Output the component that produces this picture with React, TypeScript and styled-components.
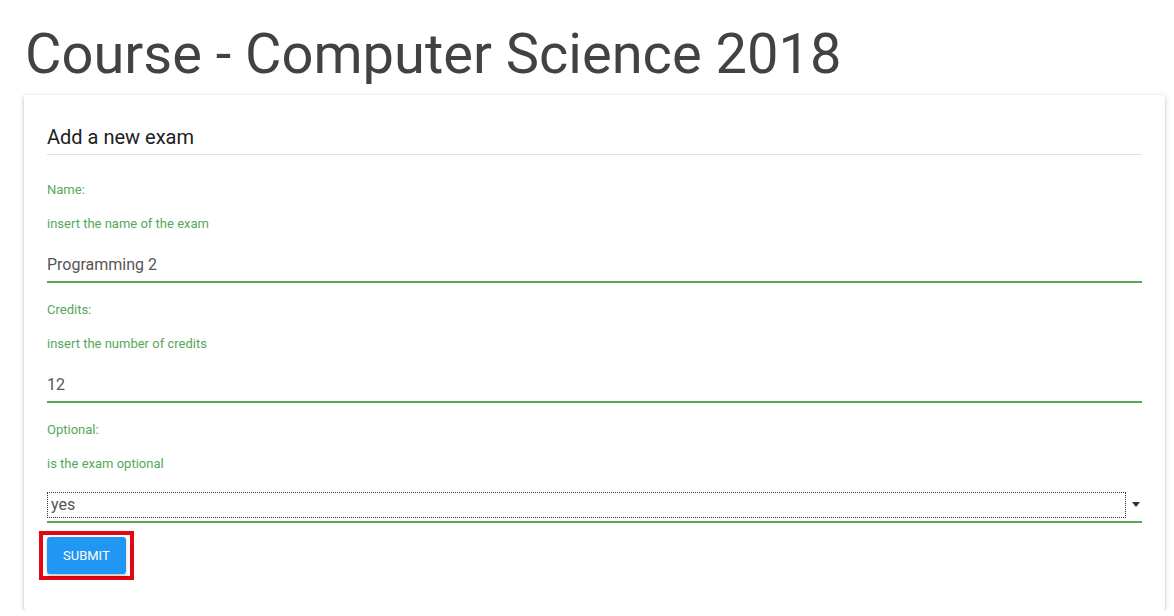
import React from "react";
import styled, { createGlobalStyle } from "styled-components";

const GlobalStyle = createGlobalStyle`
  html, body {
    margin: 0;
    padding: 0;
    background: #ffffff;
    font-family: Roboto, "Liberation Sans", sans-serif;
  }
`;

const GREEN = "#55a859";

const Page = styled.div`
  padding: 0 9px 0 24px;
`;

const PageTitle = styled.h1`
  margin: 24px 0 9px 1px;
  font-size: 56px;
  line-height: 110%;
  font-weight: 400;
  color: #424242;
`;

const Card = styled.div`
  background: #ffffff;
  border-radius: 2px;
  padding: 26px 23px 30px 23px;
  box-shadow: 0 2px 2px 0 rgba(0, 0, 0, 0.14), 0 3px 1px -2px rgba(0, 0, 0, 0.12),
    0 1px 5px 0 rgba(0, 0, 0, 0.2);
`;

const CardTitle = styled.div`
  font-size: 20px;
  line-height: 32px;
  color: #212121;
  padding-bottom: 1px;
  border-bottom: 1px solid #e0e0e0;
`;

const Form = styled.form`
  display: flex;
  flex-direction: column;
  padding-top: 25px;
`;

const Field = styled.div`
  display: flex;
  flex-direction: column;
  margin-bottom: 17px;
`;

const Label = styled.div`
  font-size: 13px;
  line-height: 20px;
  color: ${GREEN};
`;

const Hint = styled(Label)`
  margin-top: 14px;
`;

const Input = styled.div`
  margin-top: 14px;
  height: 33px;
  line-height: 33px;
  font-size: 16px;
  color: #555555;
  border-bottom: 2px solid ${GREEN};
`;

const SelectRow = styled.div`
  margin-top: 14px;
  height: 35px;
  box-sizing: border-box;
  display: flex;
  align-items: flex-start;
  padding-top: 4px;
  border-bottom: 2px solid ${GREEN};
`;

const SelectBox = styled.div`
  flex: 1;
  height: 26px;
  box-sizing: border-box;
  border: 1px dotted #333333;
  padding-left: 3px;
  font-size: 16px;
  line-height: 24px;
  color: #555555;
`;

const Caret = styled.div`
  width: 16px;
  height: 26px;
  display: flex;
  align-items: center;
  justify-content: flex-end;
  padding-right: 2px;
  box-sizing: border-box;
`;

const Highlight = styled.div`
  align-self: flex-start;
  display: flex;
  margin: -9px 0 0 -8px;
  padding: 2px 4px;
  border: 4px solid #e30613;
`;

const SubmitButton = styled.button`
  height: 37px;
  padding: 0 16px;
  border: none;
  border-radius: 3px;
  background: #2196f3;
  color: #ffffff;
  font-family: Roboto, "Liberation Sans", sans-serif;
  font-size: 13px;
  text-transform: uppercase;
  box-shadow: 0 2px 2px 0 rgba(0, 0, 0, 0.14), 0 1px 5px 0 rgba(0, 0, 0, 0.12);
  cursor: pointer;
`;

export default function App() {
  return (
    <>
      <GlobalStyle />
      <Page>
        <PageTitle>Course - Computer Science 2018</PageTitle>
        <Card>
          <CardTitle>Add a new exam</CardTitle>
          <Form onSubmit={(e) => e.preventDefault()}>
            <Field>
              <Label>Name:</Label>
              <Hint>insert the name of the exam</Hint>
              <Input>Programming 2</Input>
            </Field>
            <Field>
              <Label>Credits:</Label>
              <Hint>insert the number of credits</Hint>
              <Input>12</Input>
            </Field>
            <Field>
              <Label>Optional:</Label>
              <Hint>is the exam optional</Hint>
              <SelectRow>
                <SelectBox>yes</SelectBox>
                <Caret>
                  <svg width="8" height="5" viewBox="0 0 8 5">
                    <polygon points="0,0 8,0 4,5" fill="#333333" />
                  </svg>
                </Caret>
              </SelectRow>
            </Field>
            <Highlight>
              <SubmitButton type="submit">Submit</SubmitButton>
            </Highlight>
          </Form>
        </Card>
      </Page>
    </>
  );
}
